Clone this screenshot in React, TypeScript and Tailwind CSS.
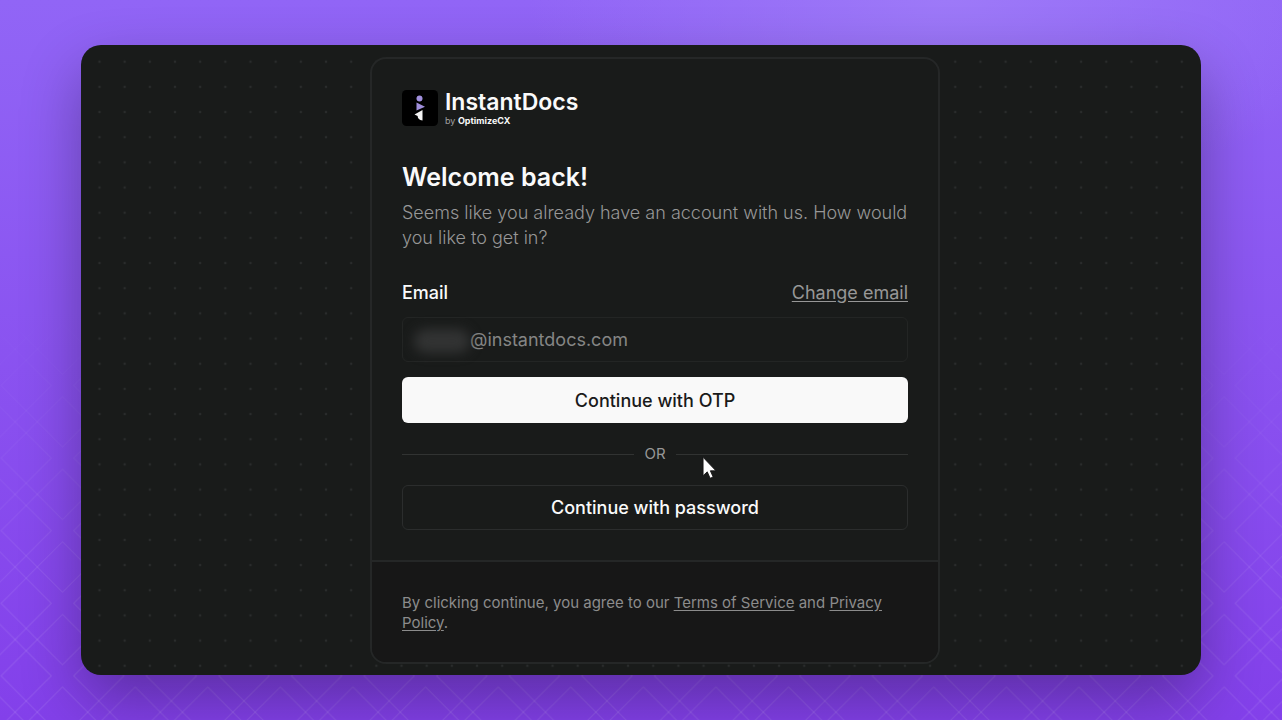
import React from 'react';

const TILE = 72.6;
const DOT = 25.17;

const DiamondPattern = () => {
  const offsets = [-TILE, 0, TILE];
  return (
    <svg
      aria-hidden="true"
      className="absolute inset-0 h-full w-full [mask-image:linear-gradient(to_bottom,transparent_40%,black_90%)]"
    >
      <defs>
        <pattern id="diamonds" x="26.2" y="494.4" width={TILE} height={TILE} patternUnits="userSpaceOnUse">
          {offsets.map((dx) =>
            offsets.map((dy) => (
              <path
                key={`${dx}:${dy}`}
                d="M36.3 -25.2 L97.8 36.3 L36.3 97.8 L-25.2 36.3 Z"
                transform={`translate(${dx} ${dy})`}
                fill="none"
                stroke="#ffffff"
                strokeOpacity="0.1"
                strokeWidth="1.1"
              />
            ))
          )}
        </pattern>
      </defs>
      <rect width="100%" height="100%" fill="url(#diamonds)" />
    </svg>
  );
};

const DotGrid = () => (
  <svg aria-hidden="true" className="absolute inset-0 h-full w-full">
    <defs>
      <pattern id="dots" x="5.9" y="4.1" width={DOT} height={DOT} patternUnits="userSpaceOnUse">
        <circle cx="12.6" cy="12.6" r="1.2" fill="#2a2c2c" />
      </pattern>
    </defs>
    <rect width="100%" height="100%" fill="url(#dots)" />
  </svg>
);

const Logo = () => (
  <div className="flex items-start gap-[7px]">
    <svg viewBox="0 0 36 36" className="h-9 w-9" aria-hidden="true">
      <rect width="36" height="36" rx="4.5" fill="#000000" />
      <circle cx="17.5" cy="8.5" r="3" fill="#a08fdc" />
      <path d="M14.5 12.5 L23 16.8 L14.5 20.5 Z" fill="#a08fdc" />
      <path d="M20.5 20 V30.5 C17.2 30.2 15.8 28.4 15.6 26 L12.5 24.6 Z" fill="#f4f4f4" />
    </svg>
    <div>
      <div className="text-[23px] leading-6 font-semibold text-[#fafafa]">InstantDocs</div>
      <div className="text-[9px] leading-[14px] text-[#a1a1a1]">
        by <span className="font-bold text-[#fafafa]">OptimizeCX</span>
      </div>
    </div>
  </div>
);

const Cursor = () => (
  <svg viewBox="0 0 14 22" className="absolute top-3 left-[300px] h-6 w-[15px]" aria-hidden="true">
    <path
      d="M1 1 V18.2 L4.9 14.6 L7.6 20.6 L10.4 19.4 L7.8 13.6 H13 Z"
      fill="#ffffff"
      stroke="#111111"
      strokeWidth="0.8"
    />
  </svg>
);

const LoginCard = () => (
  <main className="relative w-full max-w-[570px] overflow-hidden rounded-2xl border-2 border-[#252727] bg-[#191b1a]">
    <form className="px-[30px] pt-[31px] pb-[30px]" onSubmit={(e) => e.preventDefault()}>
      <Logo />
      <h1 className="mt-[33px] text-[25px] leading-8 font-semibold text-[#fafafa]">Welcome back!</h1>
      <p className="mt-[7px] text-[18px] leading-[25px] font-light text-[#979797]">
        Seems like you already have an account with us. How would you like to get in?
      </p>

      <div className="mt-[31px] flex items-center justify-between text-[18px] leading-6">
        <label htmlFor="email" className="font-medium text-[#fafafa]">
          Email
        </label>
        <a href="#change" className="text-[#979797] underline underline-offset-2">
          Change email
        </a>
      </div>
      <div className="relative mt-3">
        <input
          id="email"
          type="text"
          readOnly
          value="@instantdocs.com"
          className="block h-[45px] w-full rounded-md border border-[#232524] bg-transparent pr-4 pl-[67px] text-[18px] text-[#858685] outline-none"
        />
        <span className="absolute top-3 left-3 h-6 w-14 rounded-full bg-[#323333] blur-[6px]" />
      </div>
      <button
        type="submit"
        className="mt-[15px] block h-[46px] w-full rounded-md bg-[#f9f9f9] text-[18px] font-medium text-[#1a1a1a]"
      >
        Continue with OTP
      </button>

      <div className="relative mt-[21px] flex items-center gap-[10px]">
        <span className="h-px flex-1 bg-[#313332]" />
        <span className="text-[15px] leading-5 text-[#979797]">OR</span>
        <span className="h-px flex-1 bg-[#313332]" />
        <Cursor />
      </div>

      <button
        type="button"
        className="mt-[21px] block h-[45px] w-full rounded-md border border-[#2b2d2d] text-[18px] font-medium text-[#fafafa]"
      >
        Continue with password
      </button>
    </form>

    <footer className="border-t-2 border-[#252727] bg-[#171717] px-[30px] pt-[31px] pb-[29px]">
      <p className="text-[15px] leading-5 text-[#8c8c8c]">
        By clicking continue, you agree to our{' '}
        <a href="#terms" className="underline underline-offset-2">
          Terms of Service
        </a>{' '}
        and{' '}
        <a href="#privacy" className="underline underline-offset-2">
          Privacy Policy
        </a>
        .
      </p>
    </footer>
  </main>
);

const App = () => {
  return (
    <div className="relative flex min-h-screen items-center bg-[radial-gradient(ellipse_420px_200px_at_74%_0%,#9d79f8,transparent),linear-gradient(to_bottom,#9165f6,#8340ea)] px-[81px] py-[45px] font-['Inter',sans-serif]">
      <DiamondPattern />
      <div className="relative flex w-full justify-center overflow-hidden rounded-[20px] bg-[#191b1a] pt-3 pr-0 pb-[11px] pl-7 shadow-[0_25px_60px_rgba(0,0,0,0.3)]">
        <DotGrid />
        <LoginCard />
      </div>
    </div>
  );
};

export default App;
